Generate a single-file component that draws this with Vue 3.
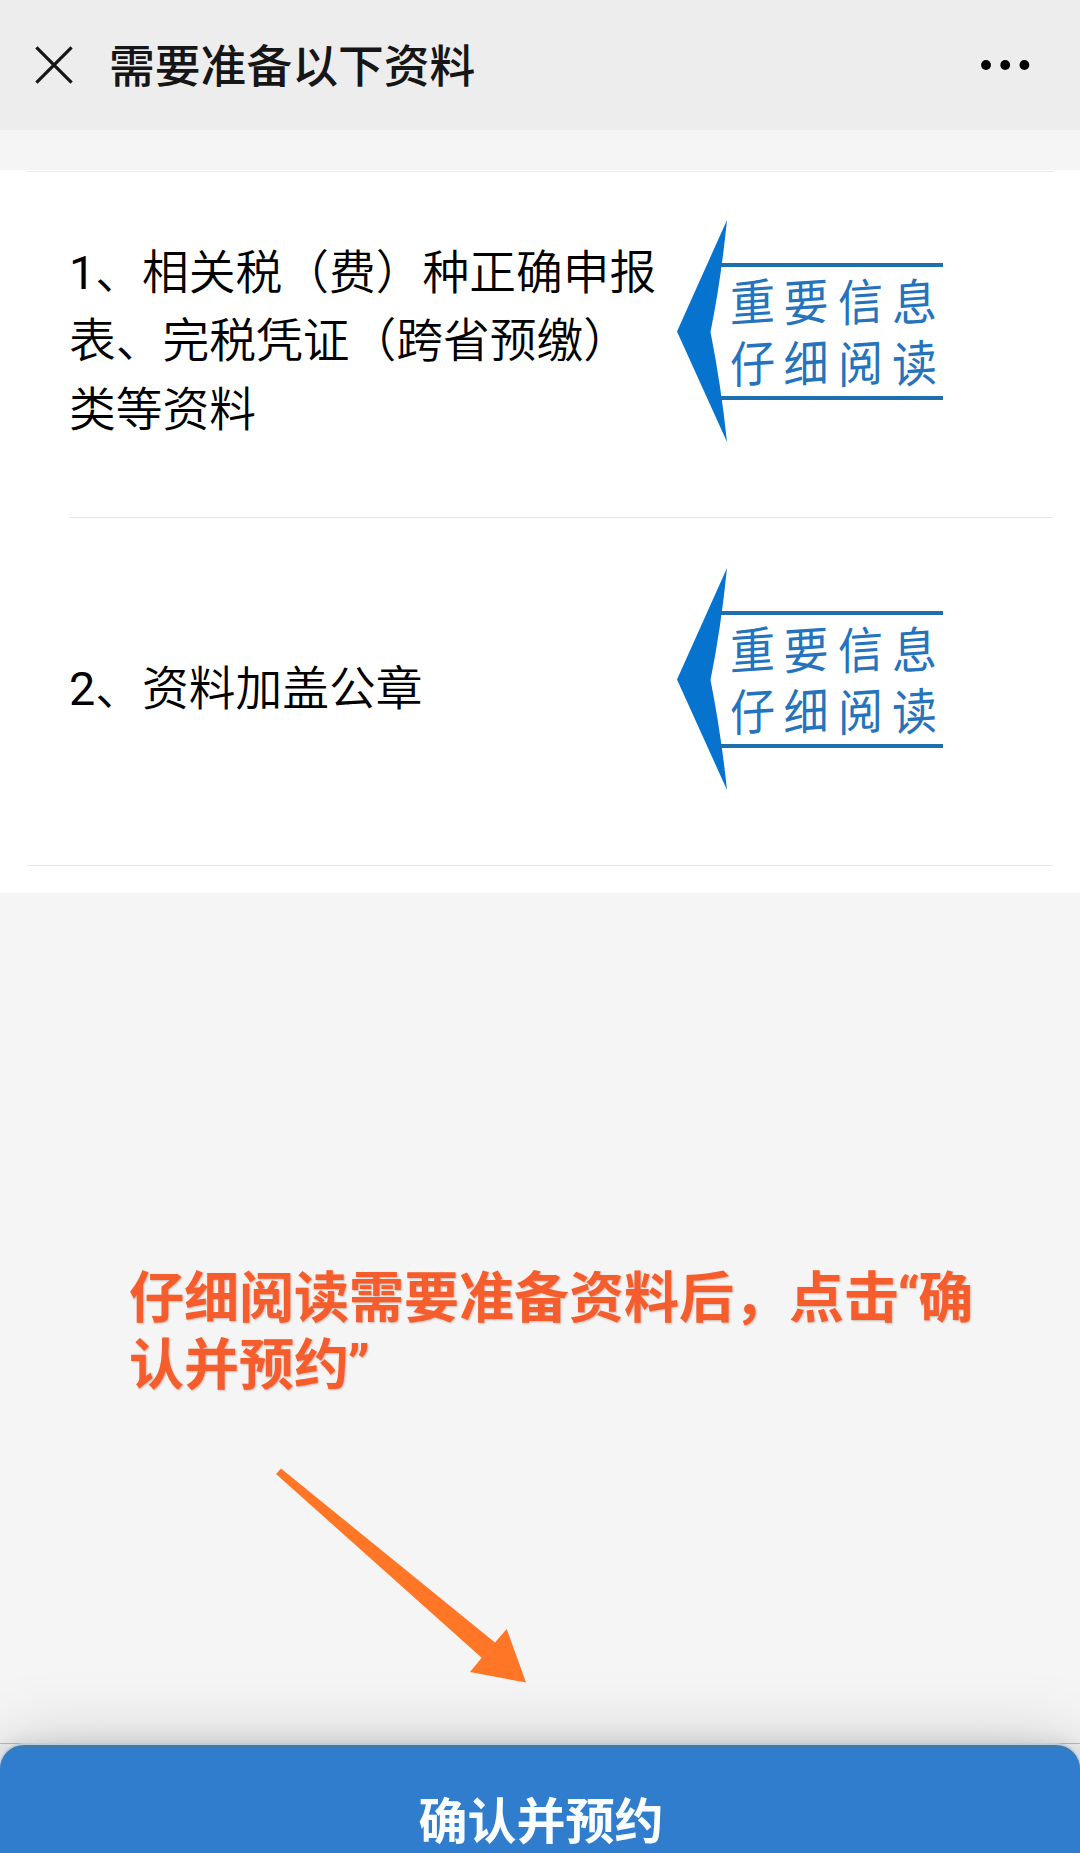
<script setup>
const items = [
  { no: '1', lines: ['、相关税（费）种正确申报', '表、完税凭证（跨省预缴）', '类等资料'] },
  { no: '2', lines: ['、资料加盖公章'] },
]
const stampRows = [
  { text: '重要信息', y: 100.5 },
  { text: '仔细阅读', y: 162 },
]
const stampX = [75.5, 129, 183.5, 237.5]
</script>

<template>
  <div class="page">
    <header class="bar">
      <svg class="close" width="38" height="38" viewBox="0 0 38 38">
        <path d="M1.4 1.4 36.6 36.6M36.6 1.4 1.4 36.6" stroke="#161616" stroke-width="3.2" fill="none" />
      </svg>
      <h1>需要准备以下资料</h1>
      <svg class="more" width="50" height="12" viewBox="0 0 50 12">
        <circle cx="6" cy="6" r="4.9" />
        <circle cx="25.2" cy="6" r="4.9" />
        <circle cx="44.4" cy="6" r="4.9" />
      </svg>
    </header>

    <main class="list">
      <section v-for="item in items" :key="item.no" class="item">
        <p class="desc">
          <span v-for="(line, n) in item.lines" :key="line"><b v-if="n === 0">{{ item.no }}</b>{{ line }}</span>
        </p>
        <svg class="stamp" width="268" height="224" viewBox="0 0 268 224">
          <path d="M50 0Q44 60 33.500 112Q44 165 50 222L0 111.500Z" fill="#0673cf" />
          <path d="M43 45H266M43 178H266" stroke="#1d6fae" stroke-width="4" />
          <g v-for="row in stampRows" :key="row.text">
            <text
              v-for="(ch, c) in row.text"
              :key="c"
              :transform="`translate(${stampX[c]} ${row.y}) skewY(-4) scale(1 1.1)`"
              text-anchor="middle"
            >{{ ch }}</text>
          </g>
        </svg>
      </section>
    </main>

    <div class="guide">
      <p class="tip"><span>仔细阅读需要准备资料后，点击<i>“</i>确</span><span>认并预约<i>”</i></span></p>
      <svg class="pointer" width="252" height="216" viewBox="0 0 252 216">
        <path d="M0 6 5 0.500 219 174.500 230.700 161 250 214.500 194 204 205.700 189.700Z" fill="#ff7726" />
      </svg>
    </div>

    <footer class="foot">
      <button class="confirm">确认并预约</button>
    </footer>
  </div>
</template>

<style>
body {
  margin: 0;
  background: #f5f5f5;
}
</style>

<style scoped>
.page {
  display: flex;
  flex-direction: column;
  width: 1080px;
  height: 1853px;
  overflow: hidden;
  background: #f5f5f5;
  font-family: Roboto, "Noto Sans CJK SC", sans-serif;
}
.bar {
  display: flex;
  align-items: center;
  box-sizing: border-box;
  flex: none;
  height: 130px;
  padding: 0 50px 1px 35px;
  background: #ededed;
}
.close {
  flex: none;
}
h1 {
  flex: 1;
  margin: 7px 0 0 36px;
  font-size: 45.8px;
  line-height: 60px;
  font-weight: 500;
  color: #161616;
}
.more {
  flex: none;
}
.list {
  flex: none;
  box-sizing: border-box;
  height: 723px;
  margin-top: 40px;
  padding: 0 27px;
  background: linear-gradient(#e9e9e9, #e9e9e9) 27px 1px / 1027px 1px no-repeat, #fff;
}
.item {
  display: flex;
  align-items: center;
  box-sizing: border-box;
  height: 349px;
  padding-left: 42px;
}
.item + .item {
  background: linear-gradient(#e6e6e6, #e6e6e6) 42px 0 / 985px 1px no-repeat;
  border-bottom: 1px solid #e6e6e6;
}
.item:first-child {
  height: 347px;
}
.desc {
  width: 608px;
  margin: -4px 0 0;
  font-size: 46.75px;
  line-height: 68.5px;
  font-weight: 350;
  color: #000;
  white-space: nowrap;
}
.desc b {
  font-weight: 400;
}
.desc span,
.tip span {
  display: block;
}
.stamp {
  flex: none;
  margin-bottom: 24px;
}
.item + .item .stamp {
  margin-bottom: 22px;
}
.stamp text {
  font-family: "Noto Sans CJK SC", sans-serif;
  font-size: 45px;
  font-weight: 400;
  fill: #2673bd;
}
.guide {
  flex: 1;
  padding: 372px 0 0 129px;
}
.tip {
  margin: 0;
  font-size: 55px;
  line-height: 67px;
  font-weight: 700;
  color: #f65d2c;
  text-shadow: 1px 1px 2px rgba(120, 70, 50, 0.35);
  white-space: nowrap;
}
.tip i {
  font-style: normal;
  margin: 0 -1.5px;
}
.pointer {
  display: block;
  margin: 69px 0 0 147px;
}
.foot {
  flex: none;
  height: 109px;
  border-top: 1px solid #bfbfbf;
}
.confirm {
  display: flex;
  justify-content: center;
  align-items: flex-start;
  box-sizing: border-box;
  width: 1080px;
  height: 160px;
  margin: 1px 0 0;
  padding: 46px 0 0 2px;
  border: 0;
  border-top: 2px solid #4b7899;
  border-radius: 24px 24px 0 0;
  background: #307dce;
  box-shadow: 0 -1px 0 1px #b5d0ea, 0 12px 85px rgba(0, 0, 0, 0.24), 0 0 24px rgba(0, 0, 0, 0.12);
  color: #fafeff;
  font: 700 49px/60px Roboto, "Noto Sans CJK SC", sans-serif;
}
</style>
